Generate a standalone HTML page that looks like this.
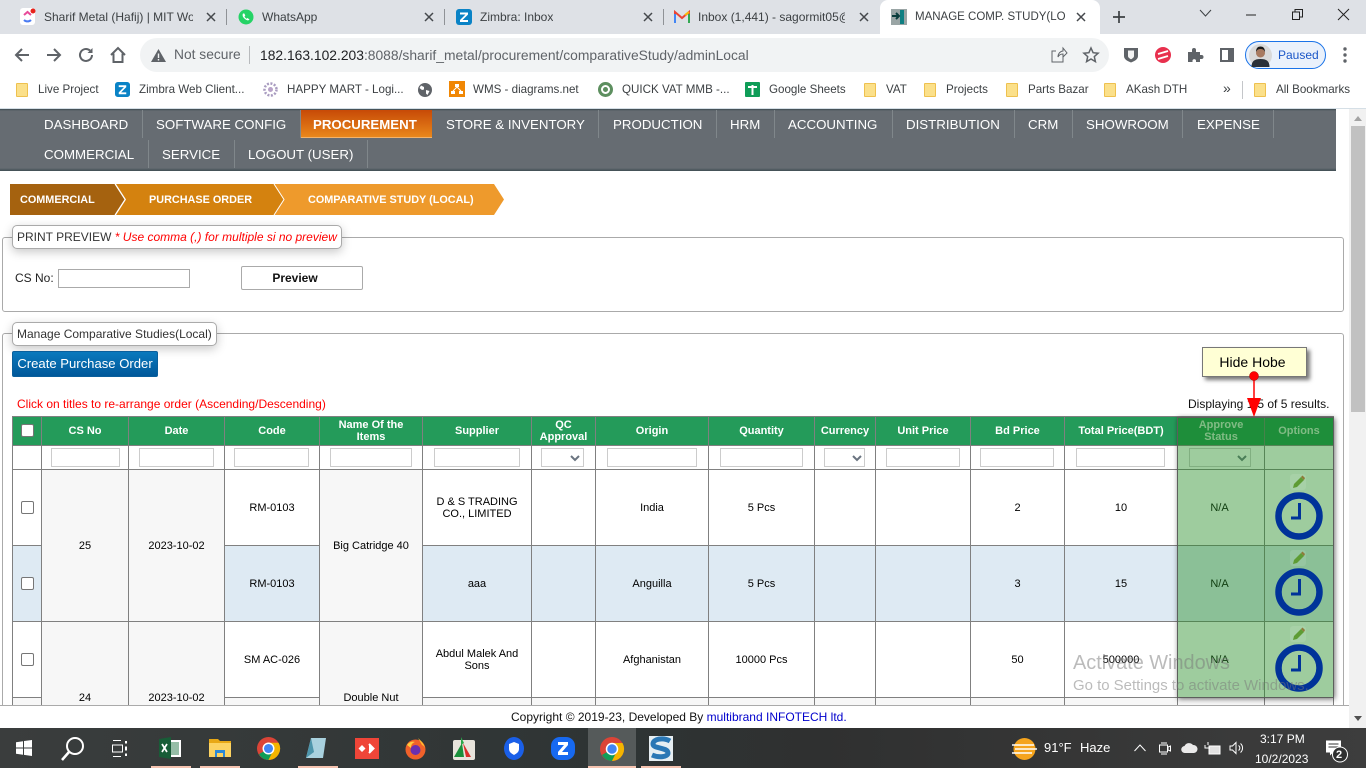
<!DOCTYPE html>
<html><head><meta charset="utf-8"><title>Manage Comp. Study</title>
<style>
*{box-sizing:border-box}
html,body{margin:0;padding:0;width:1366px;height:768px;overflow:hidden;background:#fff;font-family:"Liberation Sans",Arial,sans-serif;color:#000}
.a{position:absolute}
.t{position:absolute;white-space:nowrap;line-height:16px}
svg{position:absolute;overflow:visible}
.tab{font-size:12px;color:#3c4043;top:9px;overflow:hidden}
.bm{font-size:11.6px;color:#3c4043;top:82px}
.fo{position:absolute;top:83px;width:12px;height:14px;background:#fbe08a;border:1px solid #eec14f;border-radius:1px}
.nv{font-size:13.3px;color:#fff;line-height:16px}
.sp{position:absolute;width:1px;background:#80878b}
table{position:absolute;left:12px;top:416px;border-collapse:collapse;table-layout:fixed;width:1322px;font-size:11px;text-align:center}
td,th{border:1px solid #808080;padding:0;overflow:hidden}
th{background:#249b5a;color:#fff;font-size:11px;line-height:12px;font-weight:bold;height:29px}
td{height:76px;line-height:12px;background:#fff}
tr.f td{height:24px}
.g{background:#f7f7f7}
.b{background:#deeaf3}
.in{position:absolute;top:448px;height:19px;border:1px solid #ccc;background:#fff}
.cb{position:absolute;left:21px;width:13px;height:13px;border:1px solid #767676;border-radius:2px;background:#fff}
.tb{position:absolute;top:766px;height:2px;background:#f5c3b0}
.pb{position:absolute;left:1290px;width:16px;height:16px;background:rgba(255,255,255,.1);border-radius:3px}
</style></head><body>

<!-- tab strip -->
<div class="a" style="left:0;top:0;width:1366px;height:34px;background:#dee1e6"></div>
<div class="a" style="left:880px;top:0;width:220px;height:35px;background:#fff;border-radius:8px 8px 0 0"></div>
<div class="a" style="left:226px;top:9px;width:1px;height:16px;background:#8f9296"></div>
<div class="a" style="left:444px;top:9px;width:1px;height:16px;background:#8f9296"></div>
<div class="a" style="left:663px;top:9px;width:1px;height:16px;background:#8f9296"></div>

<svg style="left:20px;top:8px" width="16" height="18" viewBox="0 0 16 18"><rect width="15" height="17" rx="3" fill="#fff"/><path d="M4 12a5 5 0 0 0 7 0" stroke="#4a7bf2" stroke-width="2" fill="none"/><path d="M4 7l3.500-3 3.500 3" stroke="#e84a9a" stroke-width="2" fill="none"/><circle cx="13" cy="3" r="2.500" fill="#e8221a"/></svg>
<div class="t tab" style="left:44px;width:149px">Sharif Metal (Hafij) | MIT Wo</div>
<svg style="left:238px;top:9px" width="16" height="16" viewBox="0 0 16 16"><circle cx="8" cy="8" r="7.500" fill="#25d366"/><path d="M5 4.500c-1 2 0 4 2 5.500s3.500 1.800 4.500.5l-2-1.500-1 .7c-1-.5-1.500-1.200-2-2.200l.8-1-1-2z" fill="#fff"/></svg>
<div class="t tab" style="left:262px">WhatsApp</div>
<svg style="left:456px;top:9px" width="16" height="16" viewBox="0 0 16 16"><rect width="16" height="16" rx="3" fill="#0a83c6"/><path d="M4 3.500h8v2L6.500 11H12v2H4v-2l5.500-5.500H4z" fill="#fff"/></svg>
<div class="t tab" style="left:480px">Zimbra: Inbox</div>
<svg style="left:674px;top:11px" width="16" height="12" viewBox="0 0 16 12"><path d="M1 12V1l7 6 7-6v11" fill="none" stroke="#ea4335" stroke-width="2"/><path d="M1 12V3" stroke="#4285f4" stroke-width="2"/><path d="M15 12V3" stroke="#34a853" stroke-width="2"/><path d="M11 4l4-3" stroke="#fbbc04" stroke-width="2"/></svg>
<div class="t tab" style="left:698px;width:147px">Inbox (1,441) - sagormit05@</div>
<svg style="left:891px;top:9px" width="16" height="16" viewBox="0 0 16 16"><rect width="16" height="16" fill="#9aa5a5"/><path d="M9 1h4v14H9z" fill="#0e7f82"/><path d="M1 7h7M5 4l3 3-3 3" stroke="#0a3c3c" stroke-width="2" fill="none"/></svg>
<div class="t tab" style="left:915px;width:151px;font-size:11.5px">MANAGE COMP. STUDY(LOC</div>

<svg style="left:207px;top:13px" width="8" height="8"><path d="M0 0l8 8M8 0l-8 8" stroke="#45484c" stroke-width="1.500"/></svg>
<svg style="left:425px;top:13px" width="8" height="8"><path d="M0 0l8 8M8 0l-8 8" stroke="#45484c" stroke-width="1.500"/></svg>
<svg style="left:644px;top:13px" width="8" height="8"><path d="M0 0l8 8M8 0l-8 8" stroke="#45484c" stroke-width="1.500"/></svg>
<svg style="left:860px;top:13px" width="8" height="8"><path d="M0 0l8 8M8 0l-8 8" stroke="#45484c" stroke-width="1.500"/></svg>
<svg style="left:1077px;top:13px" width="8" height="8"><path d="M0 0l8 8M8 0l-8 8" stroke="#45484c" stroke-width="1.500"/></svg>
<svg style="left:1113px;top:11px" width="12" height="12"><path d="M6 0v12M0 6h12" stroke="#3c4043" stroke-width="1.700"/></svg>
<svg style="left:1200px;top:10px" width="11" height="7"><path d="M0 0l5.500 6 5.500-6" stroke="#3c4043" fill="none"/></svg>
<svg style="left:1246px;top:14px" width="10" height="2"><path d="M0 1h10" stroke="#222"/></svg>
<svg style="left:1292px;top:9px" width="11" height="11"><path d="M.5 3h7v7.500h-7zM3 3V.5h7.500V8H8" stroke="#222" fill="none"/></svg>
<svg style="left:1338px;top:9px" width="11" height="11"><path d="M0 0l11 11M11 0L0 11" stroke="#222"/></svg>

<!-- toolbar -->
<svg style="left:14px;top:47px" width="16" height="16" viewBox="0 0 16 16"><path d="M15 8H2M8 2L2 8l6 6" stroke="#5f6368" stroke-width="2" fill="none"/></svg>
<svg style="left:46px;top:47px" width="16" height="16" viewBox="0 0 16 16"><path d="M1 8h13M8 2l6 6-6 6" stroke="#5f6368" stroke-width="2" fill="none"/></svg>
<svg style="left:78px;top:47px" width="16" height="16" viewBox="0 0 16 16"><path d="M14 8a6 6 0 1 1-2-4.500" stroke="#5f6368" stroke-width="2" fill="none"/><path d="M14.500 1v5h-5z" fill="#5f6368"/></svg>
<svg style="left:110px;top:47px" width="16" height="16" viewBox="0 0 16 16"><path d="M1 8l7-7 7 7M3.500 6.500V15h9V6.500" stroke="#5f6368" stroke-width="2" fill="none"/></svg>
<div class="a" style="left:140px;top:38px;width:969px;height:34px;border-radius:17px;background:#f1f3f4"></div>
<svg style="left:151px;top:49px" width="15" height="13" viewBox="0 0 15 13"><path d="M7.500 0L15 13H0z" fill="#5f6368"/><path d="M7.500 4.500v4.500M7.500 10v1.500" stroke="#f1f3f4" stroke-width="1.400"/></svg>
<div class="t" style="left:174px;top:47px;font-size:13.8px;color:#5f6368">Not secure</div>
<div class="a" style="left:249px;top:46px;width:1px;height:18px;background:#b8babd"></div>
<div class="t" style="left:260px;top:47px;font-size:13.85px;color:#5f6368"><span style="color:#202124">182.163.102.203</span>:8088/sharif_metal/procurement/comparativeStudy/adminLocal</div>
<svg style="left:1051px;top:47px" width="16" height="16" viewBox="0 0 16 16"><path d="M12 9v6H1V4h4M7 10c0-4 3-6 5-6V1l4 5-4 4V7c-2 0-4 1-5 3z" stroke="#5f6368" fill="none"/></svg>
<svg style="left:1083px;top:47px" width="16" height="16" viewBox="0 0 16 16"><path d="M8 1l2.100 4.700 5 .5-3.800 3.400 1.100 5L8 12l-4.400 2.600 1.100-5L.9 6.200l5-.5z" stroke="#5f6368" stroke-width="1.500" fill="none"/></svg>
<svg style="left:1123px;top:47px" width="16" height="16" viewBox="0 0 16 16"><path d="M1 1h14v8c0 3-3 5-7 6.500C4 14 1 12 1 9z" fill="#5f6368"/><path d="M5 3.500h6v5.500c0 1.500-1.500 2.500-3 3.300C6.500 11.500 5 10.500 5 9z" fill="#f3f3f3"/></svg>
<svg style="left:1155px;top:47px" width="16" height="16" viewBox="0 0 16 16"><circle cx="8" cy="8" r="8" fill="#e8304e"/><path d="M3 7l10-3M3 12l10-3" stroke="#fff" stroke-width="1.800"/></svg>
<svg style="left:1187px;top:47px" width="16" height="16" viewBox="0 0 16 16"><path d="M1 5h4V3a2 2 0 0 1 4 0v2h4v3h1.500a2 2 0 0 1 0 4H13v3H9v-1.500a1.800 1.800 0 0 0-3.500 0V15H1z" fill="#5f6368"/></svg>
<svg style="left:1220px;top:48px" width="14" height="14" viewBox="0 0 14 14"><path d="M0 0h14v14H0z" fill="#5f6368"/><path d="M2 2h6v10H2z" fill="#fff"/></svg>
<div class="a" style="left:1245px;top:41px;width:81px;height:28px;border-radius:14px;border:1px solid #1a73e8;background:#eaf1fb"></div>
<svg style="left:1249px;top:44px" width="23" height="23" viewBox="0 0 23 23"><circle cx="11.500" cy="11.500" r="11.500" fill="#d9d9d9"/><path d="M2.500 23c0-6 3-8 9-8s9 2 9 8z" fill="#2a3038"/><circle cx="11.500" cy="9" r="4.500" fill="#a87a60"/><path d="M7 8c0-4 2-5.500 4.500-5.500S16 4 16 8c-1-2-2-3-4.500-3S8 6 7 8z" fill="#1a1a1a"/></svg>
<div class="t" style="left:1278px;top:47px;font-size:12px;color:#1a56c8">Paused</div>
<svg style="left:1343px;top:47px" width="4" height="16"><circle cx="2" cy="2" r="1.700" fill="#5f6368"/><circle cx="2" cy="8" r="1.700" fill="#5f6368"/><circle cx="2" cy="14" r="1.700" fill="#5f6368"/></svg>

<!-- bookmarks -->
<div class="fo" style="left:16px"></div><div class="t bm" style="left:38px">Live Project</div>
<svg style="left:115px;top:82px" width="15" height="15" viewBox="0 0 16 16"><rect width="16" height="16" rx="3" fill="#0a83c6"/><path d="M4 3.500h8v2L6.500 11H12v2H4v-2l5.500-5.500H4z" fill="#fff"/></svg>
<div class="t bm" style="left:139px">Zimbra Web Client...</div>
<svg style="left:263px;top:82px" width="15" height="15" viewBox="0 0 15 15"><circle cx="7.500" cy="7.500" r="6" fill="none" stroke="#a99cc0" stroke-width="2.500" stroke-dasharray="2 1.500"/><circle cx="7.500" cy="7.500" r="2.500" fill="#b8a3c9"/></svg>
<div class="t bm" style="left:287px">HAPPY MART - Logi...</div>
<svg style="left:418px;top:83px" width="14" height="14" viewBox="0 0 14 14"><circle cx="7" cy="7" r="7" fill="#5f6368"/><path d="M3 2.500l3 1.500v2.500l-2 .5-2.500-2zM8 7l3.500 1-2 4-1.500-1.500z" fill="#fff"/></svg>
<div class="t bm" style="left:473px">WMS - diagrams.net</div>
<svg style="left:449px;top:81px" width="16" height="16" viewBox="0 0 16 16"><rect width="16" height="16" fill="#f08705"/><path d="M6 3h4v3H6zM2 10h4v3H2zM10 10h4v3h-4z" fill="#fff"/><path d="M8 6l-4 4M8 6l4 4" stroke="#fff"/></svg>
<svg style="left:598px;top:82px" width="15" height="15" viewBox="0 0 15 15"><circle cx="7.500" cy="7.500" r="7.500" fill="#5d8f5f"/><circle cx="7.500" cy="7.500" r="3.500" fill="none" stroke="#fff" stroke-width="2"/></svg>
<div class="t bm" style="left:622px">QUICK VAT MMB -...</div>
<svg style="left:745px;top:82px" width="15" height="15" viewBox="0 0 15 15"><rect width="15" height="15" rx="1" fill="#0f9d58"/><path d="M3 5h9M7.500 3v10" stroke="#fff" stroke-width="2"/></svg>
<div class="t bm" style="left:769px">Google Sheets</div>
<div class="fo" style="left:864px"></div><div class="t bm" style="left:886px">VAT</div>
<div class="fo" style="left:924px"></div><div class="t bm" style="left:946px">Projects</div>
<div class="fo" style="left:1006px"></div><div class="t bm" style="left:1028px">Parts Bazar</div>
<div class="fo" style="left:1104px"></div><div class="t bm" style="left:1126px">AKash DTH</div>
<div class="t bm" style="left:1223px;font-size:14px;top:80px">»</div>
<div class="a" style="left:1242px;top:81px;width:1px;height:18px;background:#c4c6c9"></div>
<div class="fo" style="left:1254px"></div><div class="t bm" style="left:1276px">All Bookmarks</div>

<!-- nav -->
<div class="a" style="left:0;top:108px;width:1366px;height:1px;background:#d5dfe6"></div>
<div class="a" style="left:0;top:109px;width:1336px;height:62px;background:linear-gradient(#3c4a50 0,#666c72 2px,#666c72 59px,#3f4c52 62px)"></div>
<div class="a" style="left:301px;top:110px;width:131px;height:28px;background:linear-gradient(#c74a07,#e9871b);border-bottom:1px solid #f4b36a"></div>
<div class="t nv" style="left:44px;top:117px">DASHBOARD</div><div class="sp" style="left:142px;top:110px;height:28px"></div>
<div class="t nv" style="left:156px;top:117px">SOFTWARE CONFIG</div><div class="sp" style="left:300px;top:110px;height:28px"></div>
<div class="t nv" style="left:313px;top:117px;font-weight:bold;font-size:13.25px">PROCUREMENT</div>
<div class="t nv" style="left:446px;top:117px">STORE &amp; INVENTORY</div><div class="sp" style="left:598px;top:110px;height:28px"></div>
<div class="t nv" style="left:613px;top:117px">PRODUCTION</div><div class="sp" style="left:716px;top:110px;height:28px"></div>
<div class="t nv" style="left:730px;top:117px">HRM</div><div class="sp" style="left:774px;top:110px;height:28px"></div>
<div class="t nv" style="left:788px;top:117px">ACCOUNTING</div><div class="sp" style="left:892px;top:110px;height:28px"></div>
<div class="t nv" style="left:906px;top:117px">DISTRIBUTION</div><div class="sp" style="left:1014px;top:110px;height:28px"></div>
<div class="t nv" style="left:1028px;top:117px">CRM</div><div class="sp" style="left:1072px;top:110px;height:28px"></div>
<div class="t nv" style="left:1086px;top:117px">SHOWROOM</div><div class="sp" style="left:1182px;top:110px;height:28px"></div>
<div class="t nv" style="left:1197px;top:117px">EXPENSE</div><div class="sp" style="left:1273px;top:110px;height:28px"></div>
<div class="t nv" style="left:44px;top:147px">COMMERCIAL</div><div class="sp" style="left:148px;top:140px;height:28px"></div>
<div class="t nv" style="left:162px;top:147px">SERVICE</div><div class="sp" style="left:234px;top:140px;height:28px"></div>
<div class="t nv" style="left:248px;top:147px">LOGOUT (USER)</div><div class="sp" style="left:367px;top:140px;height:28px"></div>

<!-- breadcrumb -->
<svg style="left:0;top:0" width="520" height="220">
<path d="M274 184H494L504 199.500 494 215H274L284 199.500z" fill="#ee9a2c"/>
<path d="M116 184H274L284 199.500 274 215H116L126 199.500z" fill="#d4820f"/>
<path d="M10 184H115L125 199.500 115 215H10z" fill="#a5620f"/>
<path d="M115 184L125 199.500 115 215M274 184L284 199.500 274 215" stroke="#fff" fill="none"/>
</svg>
<div class="t" style="left:20px;top:192px;font-size:10.85px;font-weight:bold;color:#fff">COMMERCIAL</div>
<div class="t" style="left:149px;top:192px;font-size:10.85px;font-weight:bold;color:#fff">PURCHASE ORDER</div>
<div class="t" style="left:308px;top:192px;font-size:10.85px;font-weight:bold;color:#fff">COMPARATIVE STUDY (LOCAL)</div>

<!-- print preview -->
<div class="a" style="left:2px;top:237px;width:1342px;height:75px;border:1px solid #aaa;border-radius:3px"></div>
<div class="a" style="left:12px;top:225px;width:330px;height:24px;background:#fff;border:1px solid #aaa;border-radius:5px;box-shadow:0 3px 10px rgba(0,0,0,.22)"></div>
<div class="t" style="left:17px;top:229px;font-size:12px;color:#333">PRINT PREVIEW <span style="color:#f00;font-style:italic">* Use comma (,) for multiple si no preview</span></div>
<div class="t" style="left:15px;top:270px;font-size:12px;color:#222">CS No:</div>
<div class="a" style="left:58px;top:269px;width:132px;height:19px;border:1px solid #aaa"></div>
<div class="a" style="left:241px;top:266px;width:122px;height:24px;border:1px solid #aaa;border-radius:2px;text-align:center;font-size:12px;font-weight:bold;line-height:22px;color:#111;padding-right:14px">Preview</div>

<!-- manage -->
<div class="a" style="left:2px;top:333px;width:1342px;height:420px;border:1px solid #aaa;border-radius:3px"></div>
<div class="a" style="left:12px;top:322px;width:205px;height:24px;background:#fff;border:1px solid #aaa;border-radius:5px;box-shadow:0 3px 10px rgba(0,0,0,.22)"></div>
<div class="t" style="left:17px;top:326px;font-size:12px;color:#333">Manage Comparative Studies(Local)</div>
<div class="a" style="left:12px;top:351px;width:146px;height:26px;background:linear-gradient(#0a79bd,#00589a);border:1px solid #0a5f9c;border-radius:2px;color:#fff;font-size:13.1px;line-height:23px;text-align:center;white-space:nowrap">Create Purchase Order</div>
<div class="t" style="left:17px;top:396px;font-size:12px;color:#f00">Click on titles to re-arrange order (Ascending/Descending)</div>
<div class="t" style="left:1188px;top:396px;font-size:12px;color:#111">Displaying 1-5 of 5 results.</div>

<!-- table -->
<div class="a" style="left:0;top:0;width:1349px;height:705px;overflow:hidden;pointer-events:none">
<table>
<colgroup><col style="width:29px"><col style="width:87px"><col style="width:96px"><col style="width:95px"><col style="width:103px"><col style="width:109px"><col style="width:64px"><col style="width:113px"><col style="width:106px"><col style="width:61px"><col style="width:95px"><col style="width:94px"><col style="width:113px"><col style="width:87px"><col style="width:69px"></colgroup>
<tr><th></th><th>CS No</th><th>Date</th><th>Code</th><th>Name Of the<br>Items</th><th>Supplier</th><th>QC<br>Approval</th><th>Origin</th><th>Quantity</th><th>Currency</th><th>Unit Price</th><th>Bd Price</th><th>Total Price(BDT)</th><th>Approve<br>Status</th><th>Options</th></tr>
<tr class="f"><td></td><td></td><td></td><td></td><td></td><td></td><td></td><td></td><td></td><td></td><td></td><td></td><td></td><td></td><td></td></tr>
<tr><td></td><td rowspan="2" class="g">25</td><td rowspan="2" class="g">2023-10-02</td><td>RM-0103</td><td rowspan="2" class="g">Big Catridge 40</td><td>D &amp; S TRADING<br>CO., LIMITED</td><td></td><td>India</td><td>5 Pcs</td><td></td><td></td><td>2</td><td>10</td><td style="padding-right:3px">N/A</td><td></td></tr>
<tr><td class="b"></td><td class="b">RM-0103</td><td class="b">aaa</td><td class="b"></td><td class="b">Anguilla</td><td class="b">5 Pcs</td><td class="b"></td><td class="b"></td><td class="b">3</td><td class="b">15</td><td class="b" style="padding-right:3px">N/A</td><td class="b"></td></tr>
<tr><td></td><td rowspan="2" class="g">24</td><td rowspan="2" class="g">2023-10-02</td><td>SM AC-026</td><td rowspan="2" class="g">Double Nut</td><td>Abdul Malek And<br>Sons</td><td></td><td>Afghanistan</td><td>10000 Pcs</td><td></td><td></td><td>50</td><td>500000</td><td style="padding-right:3px">N/A</td><td></td></tr>
<tr><td class="g"></td><td class="g"></td><td class="g"></td><td class="g"></td><td class="g"></td><td class="g"></td><td class="g"></td><td class="g"></td><td class="g"></td><td class="g"></td><td class="g"></td><td class="g"></td></tr>
</table>
</div>

<!-- filters -->
<div class="in" style="left:51px;width:69px"></div>
<div class="in" style="left:139px;width:75px"></div>
<div class="in" style="left:234px;width:75px"></div>
<div class="in" style="left:330px;width:82px"></div>
<div class="in" style="left:434px;width:86px"></div>
<div class="in" style="left:541px;width:43px"></div>
<svg style="left:570px;top:455px" width="10" height="6"><path d="M1 1l4 4 4-4" stroke="#6a7480" stroke-width="2" fill="none"/></svg>
<div class="in" style="left:607px;width:90px"></div>
<div class="in" style="left:720px;width:83px"></div>
<div class="in" style="left:824px;width:41px"></div>
<svg style="left:852px;top:455px" width="10" height="6"><path d="M1 1l4 4 4-4" stroke="#6a7480" stroke-width="2" fill="none"/></svg>
<div class="in" style="left:886px;width:74px"></div>
<div class="in" style="left:980px;width:74px"></div>
<div class="in" style="left:1076px;width:89px"></div>
<div class="in" style="left:1189px;width:62px"></div>
<svg style="left:1237px;top:455px" width="10" height="6"><path d="M1 1l4 4 4-4" stroke="#6a7480" stroke-width="2" fill="none"/></svg>

<div class="cb" style="top:424px"></div>
<div class="cb" style="top:501px"></div>
<div class="cb" style="top:577px"></div>
<div class="cb" style="top:653px"></div>

<!-- overlay -->
<div class="a" style="left:1177px;top:417px;width:157px;height:281px;background:rgba(34,139,34,.44);border:1px solid #5c5f5c;box-shadow:1px 1px 5px rgba(0,0,0,.55)"></div>
<div class="a" style="left:1178px;top:418px;width:155px;height:27px;background:rgba(10,120,30,.2)"></div>

<!-- icons -->
<div class="pb" style="top:474px"></div><svg style="left:1290px;top:474px" width="16" height="16" viewBox="0 0 16 16"><path d="M3 14l1-4 7-7 3 3-7 7z" fill="#5e9c34"/><path d="M11 3l1.500-1.500 2.500 2.500L14 6z" fill="#8f7a3a"/></svg>
<svg style="left:1275px;top:492px" width="48" height="48" viewBox="0 0 48 48"><circle cx="24" cy="24" r="20.500" fill="none" stroke="#003399" stroke-width="6.500"/><path d="M24.500 11v15H16" fill="none" stroke="#003399" stroke-width="3"/></svg>
<div class="pb" style="top:550px"></div><svg style="left:1290px;top:550px" width="16" height="16" viewBox="0 0 16 16"><path d="M3 14l1-4 7-7 3 3-7 7z" fill="#5e9c34"/><path d="M11 3l1.500-1.500 2.500 2.500L14 6z" fill="#8f7a3a"/></svg>
<svg style="left:1275px;top:568px" width="48" height="48" viewBox="0 0 48 48"><circle cx="24" cy="24" r="20.500" fill="none" stroke="#003399" stroke-width="6.500"/><path d="M24.500 11v15H16" fill="none" stroke="#003399" stroke-width="3"/></svg>
<div class="pb" style="top:626px"></div><svg style="left:1290px;top:626px" width="16" height="16" viewBox="0 0 16 16"><path d="M3 14l1-4 7-7 3 3-7 7z" fill="#5e9c34"/><path d="M11 3l1.500-1.500 2.500 2.500L14 6z" fill="#8f7a3a"/></svg>
<svg style="left:1275px;top:644px" width="48" height="48" viewBox="0 0 48 48"><circle cx="24" cy="24" r="20.500" fill="none" stroke="#003399" stroke-width="6.500"/><path d="M24.500 11v15H16" fill="none" stroke="#003399" stroke-width="3"/></svg>

<!-- callout -->
<div class="a" style="left:1202px;top:347px;width:105px;height:30px;background:#ffffd5;border:1px solid #777;box-shadow:3px 3px 4px #777;font-size:14px;line-height:28px;text-align:center;padding-right:4px">Hide Hobe</div>
<svg style="left:0;top:0" width="1366" height="768"><path d="M1254 376V402" stroke="#f00" stroke-width="1.500"/><path d="M1247 398h14l-7 19z" fill="#f00"/><circle cx="1254" cy="376" r="4.500" fill="#f00" stroke="#a00" stroke-width=".5"/></svg>

<!-- footer -->
<div class="a" style="left:0;top:705px;width:1349px;height:23px;background:#fff;border-top:1px solid #aaa"></div>
<div class="t" style="left:511px;top:709px;font-size:12px;color:#111">Copyright © 2019-23, Developed By <span style="color:#00c">multibrand INFOTECH ltd.</span></div>

<!-- scrollbar -->
<div class="a" style="left:1349px;top:109px;width:17px;height:619px;background:#f1f1f1"></div>
<div class="a" style="left:1351px;top:126px;width:14px;height:286px;background:#c1c1c1"></div>
<svg style="left:1354px;top:116px" width="8" height="5"><path d="M4 0l4 5H0z" fill="#a3a3a3"/></svg>
<svg style="left:1354px;top:716px" width="8" height="5"><path d="M0 0h8L4 5z" fill="#505050"/></svg>

<!-- activate windows -->
<div class="t" style="left:1073px;top:651px;font-size:19.9px;line-height:24px;color:rgba(120,120,120,.5)">Activate Windows</div>
<div class="t" style="left:1073px;top:677px;font-size:14.95px;line-height:18px;color:rgba(120,120,120,.5)">Go to Settings to activate Windows.</div>

<!-- taskbar -->
<div class="a" style="left:0;top:728px;width:1366px;height:40px;background:linear-gradient(90deg,#3a3d3d,#2e3434 45%,#2f3030 60%,#3d3d3d)"></div>
<div class="a" style="left:588px;top:728px;width:48px;height:40px;background:#555a5a"></div>
<div class="tb" style="left:151px;width:40px"></div>
<div class="tb" style="left:200px;width:40px"></div>
<div class="tb" style="left:298px;width:40px"></div>
<div class="tb" style="left:588px;width:48px"></div>
<div class="tb" style="left:641px;width:40px"></div>

<svg style="left:16px;top:740px" width="16" height="16" viewBox="0 0 16 16"><path d="M0 2.200l7-1V7.500H0zM8 1l8-1v7.500H8zM0 8.500h7v6.300l-7-1zM8 8.500h8V16l-8-1.100z" fill="#fff"/></svg>
<svg style="left:61px;top:736px" width="24" height="26" viewBox="0 0 24 26"><circle cx="14" cy="10" r="8" stroke="#fff" stroke-width="2" fill="none"/><path d="M8 16l-7 8" stroke="#fff" stroke-width="2.500"/></svg>
<svg style="left:112px;top:740px" width="16" height="17" viewBox="0 0 16 17"><path d="M1 .5h8M1 16.500h8M.5 5h10v7H.5z" stroke="#fff" fill="none"/><path d="M14 1v2.500M14 6.500v4M14 13.500V16" stroke="#fff" stroke-width="2"/></svg>
<svg style="left:159px;top:737px" width="22" height="22" viewBox="0 0 22 22"><path d="M8 3h14v17H8z" fill="#fff"/><path d="M10 5h10v13H10z" fill="#2e7d4f" opacity=".5"/><path d="M0 2l12-2v22L0 20z" fill="#185c37"/><path d="M3 7l5 8M8 7l-5 8" stroke="#fff" stroke-width="1.700"/></svg>
<svg style="left:209px;top:737px" width="22" height="22" viewBox="0 0 22 22"><path d="M0 2h9l2 2h11v5H0z" fill="#e8a815"/><path d="M0 6h22v14H0z" fill="#fcd362"/><path d="M6 13h10v7h-2v-4H8v4H6z" fill="#2b89d8"/></svg>
<svg style="left:257px;top:737px" width="23" height="23" viewBox="0 0 24 24"><circle cx="12" cy="12" r="12" fill="#db4437"/><path d="M12 12L2 18a12 12 0 0 0 10 6l6-12z" fill="#0f9d58"/><path d="M12 6h10.500A12 12 0 0 1 12 24l6-12z" fill="#f4b400"/><circle cx="12" cy="12" r="5.500" fill="#4285f4" stroke="#fff" stroke-width="1.500"/></svg>
<svg style="left:305px;top:737px" width="24" height="22" viewBox="0 0 24 22"><path d="M6 1h15l-3 20H1z" fill="#a9d1de"/><path d="M6 1l-5 20 8-6z" fill="#4d95ab"/></svg>
<div class="a" style="left:355px;top:738px;width:24px;height:21px;background:#ef4538"></div>
<svg style="left:358px;top:743px" width="18" height="11" viewBox="0 0 18 11"><path d="M4 2L.5 5.500 4 9l3.500-3.500zM11 1l4.500 4.500L11 10" fill="#fff"/><path d="M11 1l4.500 4.500L11 10" stroke="#fff" fill="none" stroke-width="2"/></svg>
<svg style="left:404px;top:737px" width="23" height="23" viewBox="0 0 23 23"><circle cx="11.500" cy="12.500" r="10" fill="#f0612a"/><path d="M14 1c3 3 7 6 7 12 0-4-3-5-3-5z" fill="#ffbd2e"/><circle cx="11.500" cy="13" r="5" fill="#6a2fb0"/><path d="M3 8c2-3 5-4 8-3-3 1-4 3-4 6z" fill="#ffcb3d"/></svg>
<svg style="left:453px;top:737px" width="22" height="23" viewBox="0 0 22 23"><rect y="3" width="22" height="20" rx="2" fill="#e8e4dc"/><path d="M1 20L9 6l2 14z" fill="#1a8f3a"/><path d="M10 6l8 14h-5z" fill="#d8302a"/><path d="M8 0l3 6-3 2z" fill="#2aa84a"/></svg>
<svg style="left:504px;top:737px" width="20" height="23" viewBox="0 0 20 23"><ellipse cx="10" cy="11.500" rx="10" ry="11.500" fill="#1a5fe8"/><path d="M5 7l5-2 5 2v5c0 3-2.500 4.500-5 6-2.500-1.500-5-3-5-6z" fill="#fff"/></svg>
<svg style="left:551px;top:737px" width="24" height="23" viewBox="0 0 24 23"><rect width="24" height="23" rx="9" fill="#1769f0"/><path d="M7 5h10v3l-6 7h6v3H7v-3l6-7H7z" fill="#fff"/></svg>
<svg style="left:600px;top:737px" width="24" height="24" viewBox="0 0 24 24"><circle cx="12" cy="12" r="12" fill="#db4437"/><path d="M12 12L2 18a12 12 0 0 0 10 6l6-12z" fill="#0f9d58"/><path d="M12 6h10.500A12 12 0 0 1 12 24l6-12z" fill="#f4b400"/><circle cx="12" cy="12" r="5.500" fill="#4285f4" stroke="#fff" stroke-width="1.500"/></svg>
<svg style="left:649px;top:736px" width="24" height="25" viewBox="0 0 24 25"><rect width="24" height="25" fill="#e6eef2"/><path d="M21 5C14 1 4 3 4 8c0 5 15 3 15 9 0 4-9 5-16 2" stroke="#2a77b5" stroke-width="5" fill="none"/></svg>

<svg style="left:1012px;top:737px" width="25" height="24" viewBox="0 0 25 24"><circle cx="12.500" cy="12" r="11" fill="#f5a41d"/><path d="M0 8h22M3 12h22M0 16h20" stroke="#fff" stroke-width="1.500"/></svg>
<div class="t" style="left:1044px;top:740px;font-size:13px;color:#fff">91°F</div>
<div class="t" style="left:1080px;top:740px;font-size:13px;color:#fff">Haze</div>
<svg style="left:1134px;top:744px" width="12" height="8"><path d="M.5 7l5.500-6 5.500 6" stroke="#fff" fill="none"/></svg>
<svg style="left:1159px;top:740px" width="12" height="17" viewBox="0 0 12 17"><path d="M2 3h6M2 14h6" stroke="#fff"/><rect x=".5" y="5" width="8" height="7" stroke="#fff" fill="none"/><path d="M9 7l2.500-1v5L9 10z" stroke="#fff" fill="none"/></svg>
<svg style="left:1181px;top:742px" width="17" height="11" viewBox="0 0 17 11"><path d="M4 11a3.500 3.500 0 0 1-.5-7A5 5 0 0 1 12 3a4 4 0 0 1 1 8z" fill="#eaeaea"/></svg>
<svg style="left:1205px;top:742px" width="16" height="13" viewBox="0 0 16 13"><path d="M4 4h11v8H4z" stroke="#fff" fill="#fff" fill-opacity=".85"/><path d="M3 0v3M0 3v3h5" stroke="#fff" fill="none"/></svg>
<svg style="left:1229px;top:741px" width="16" height="14" viewBox="0 0 16 14"><path d="M1 5h2.500L7 1.500v11L3.500 9H1z" stroke="#fff" fill="none"/><path d="M9.500 4.500a3 3 0 0 1 0 5M11.500 2.500a6 6 0 0 1 0 9" stroke="#fff" fill="none"/></svg>
<div class="t" style="left:1260px;top:731px;text-align:center;font-size:12px;color:#fff;width:42px">3:17 PM</div>
<div class="t" style="left:1255px;top:751px;width:52px;text-align:center;font-size:12px;color:#fff">10/2/2023</div>
<svg style="left:1325px;top:740px" width="24" height="24" viewBox="0 0 24 24"><path d="M1 .5h15v12H8l-3 3v-3H1z" fill="#fff"/><path d="M3.500 4h10M3.500 7h10" stroke="#333"/><circle cx="15" cy="14.500" r="7.500" fill="#2f3030" stroke="#fff"/></svg>
<div class="t" style="left:1336px;top:747px;font-size:11px;color:#fff;font-weight:bold">2</div>
</body></html>
